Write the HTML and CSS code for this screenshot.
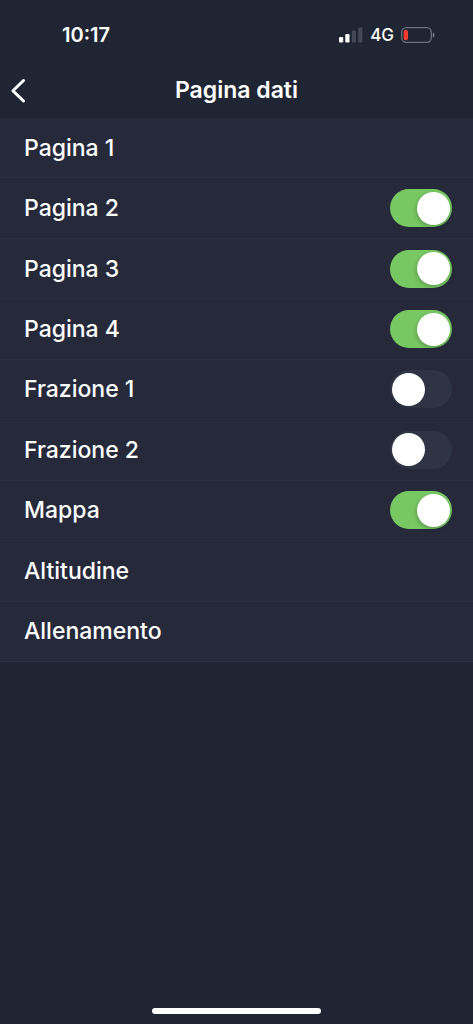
FILE: index.html
```html
<!DOCTYPE html>
<html lang="it">
<head>
<meta charset="utf-8">
<meta name="viewport" content="width=device-width, initial-scale=1">
<title>Pagina dati</title>
<link rel="stylesheet" href="styles.css">
</head>
<body>
<div class="screen">
  <div class="status">
    <time class="clock">10:17</time>
    <div class="indicators">
      <svg class="signal" width="24" height="16" viewBox="0 0 24 16" aria-hidden="true">
        <rect x="0" y="10" width="4.2" height="5.500" rx="1.2" fill="#fff"/>
        <rect x="6.3" y="7" width="4.2" height="8.500" rx="1.2" fill="#fff"/>
        <rect x="12.8" y="3.500" width="4.2" height="12" rx="1.2" fill="#434956"/>
        <rect x="19.2" y="0.500" width="4.2" height="15" rx="1.2" fill="#434956"/>
      </svg>
      <span class="network">4G</span>
      <svg class="battery" width="34" height="16" viewBox="0 0 34 16" aria-hidden="true">
        <rect x="0.7" y="0.7" width="29.6" height="14.6" rx="4.5" fill="none" stroke="#6b707b" stroke-width="1.3"/>
        <rect x="2.6" y="2.8" width="4.4" height="10.4" rx="2" fill="#f03a30"/>
        <path d="M31.8 5.4c2.2 1 2.2 4.2 0 5.200z" fill="#7b808a"/>
      </svg>
    </div>
  </div>
  <header class="navbar">
    <button class="back" type="button" aria-label="Indietro">
      <svg width="16" height="26" viewBox="0 0 16 26" aria-hidden="true">
        <path d="M13.500 3.500 3 13.800 13.500 24" fill="none" stroke="#fff" stroke-width="3" stroke-linecap="round" stroke-linejoin="round"/>
      </svg>
    </button>
    <h1 class="title">Pagina dati</h1>
  </header>
  <main class="list">
    <div class="row"><span class="label">Pagina 1</span></div>
    <label class="row"><span class="label">Pagina 2</span><input class="switch" type="checkbox" role="switch" checked></label>
    <label class="row"><span class="label">Pagina 3</span><input class="switch" type="checkbox" role="switch" checked></label>
    <label class="row"><span class="label">Pagina 4</span><input class="switch" type="checkbox" role="switch" checked></label>
    <label class="row"><span class="label">Frazione 1</span><input class="switch" type="checkbox" role="switch"></label>
    <label class="row"><span class="label">Frazione 2</span><input class="switch" type="checkbox" role="switch"></label>
    <label class="row"><span class="label">Mappa</span><input class="switch" type="checkbox" role="switch" checked></label>
    <div class="row"><span class="label">Altitudine</span></div>
    <div class="row"><span class="label">Allenamento</span></div>
  </main>
  <div class="home"></div>
</div>
</body>
</html>
```
FILE: styles.css
```css
* {
  box-sizing: border-box;
}

body {
  margin: 0;
  background: #1f2533;
  color: #fff;
  font-family: Inter, "Liberation Sans", sans-serif;
}

.screen {
  display: flex;
  flex-direction: column;
  min-height: 100vh;
}

.status {
  display: flex;
  align-items: center;
  justify-content: space-between;
  padding: 21px 38px 0 62px;
}

.clock {
  font-size: 20px;
  font-weight: 600;
  line-height: 28px;
}

.indicators {
  display: flex;
  align-items: center;
  gap: 7px;
}

.signal,
.battery {
  display: block;
}

.network {
  font-size: 17px;
  font-weight: 500;
  line-height: 28px;
}

.navbar {
  display: grid;
  grid-template-columns: 48px 1fr 48px;
  align-items: center;
  padding: 22px 0 9px;
}

.back {
  display: flex;
  padding: 6px 10px;
  border: 0;
  background: none;
}

.title {
  margin: 0;
  font-size: 23px;
  font-weight: 600;
  line-height: 28px;
  text-align: center;
}

.list {
  display: grid;
  grid-auto-rows: 1fr;
  min-height: 544px;
  background: #25293a;
}

.row {
  display: flex;
  align-items: center;
  justify-content: space-between;
  padding: 0 21px 0 24px;
  border-bottom: 1px solid #2b3041;
}

.label {
  font-size: 23px;
  font-weight: 500;
  line-height: 28px;
}

.switch {
  display: flex;
  align-items: center;
  width: 62px;
  height: 38px;
  margin: 0;
  padding: 0 2px;
  border-radius: 19px;
  appearance: none;
  background: #2e3443;
}

.switch::before {
  content: "";
  width: 33px;
  height: 33px;
  border-radius: 50%;
  background: #fff;
}

.switch:checked {
  justify-content: flex-end;
  background: #77c763;
}

.switch:checked::before {
  box-shadow: -1px 2px 4px rgba(0, 0, 0, 0.2);
}

.home {
  width: 169px;
  height: 6px;
  margin: auto auto 10px;
  border-radius: 3px;
  background: #fff;
}
```
